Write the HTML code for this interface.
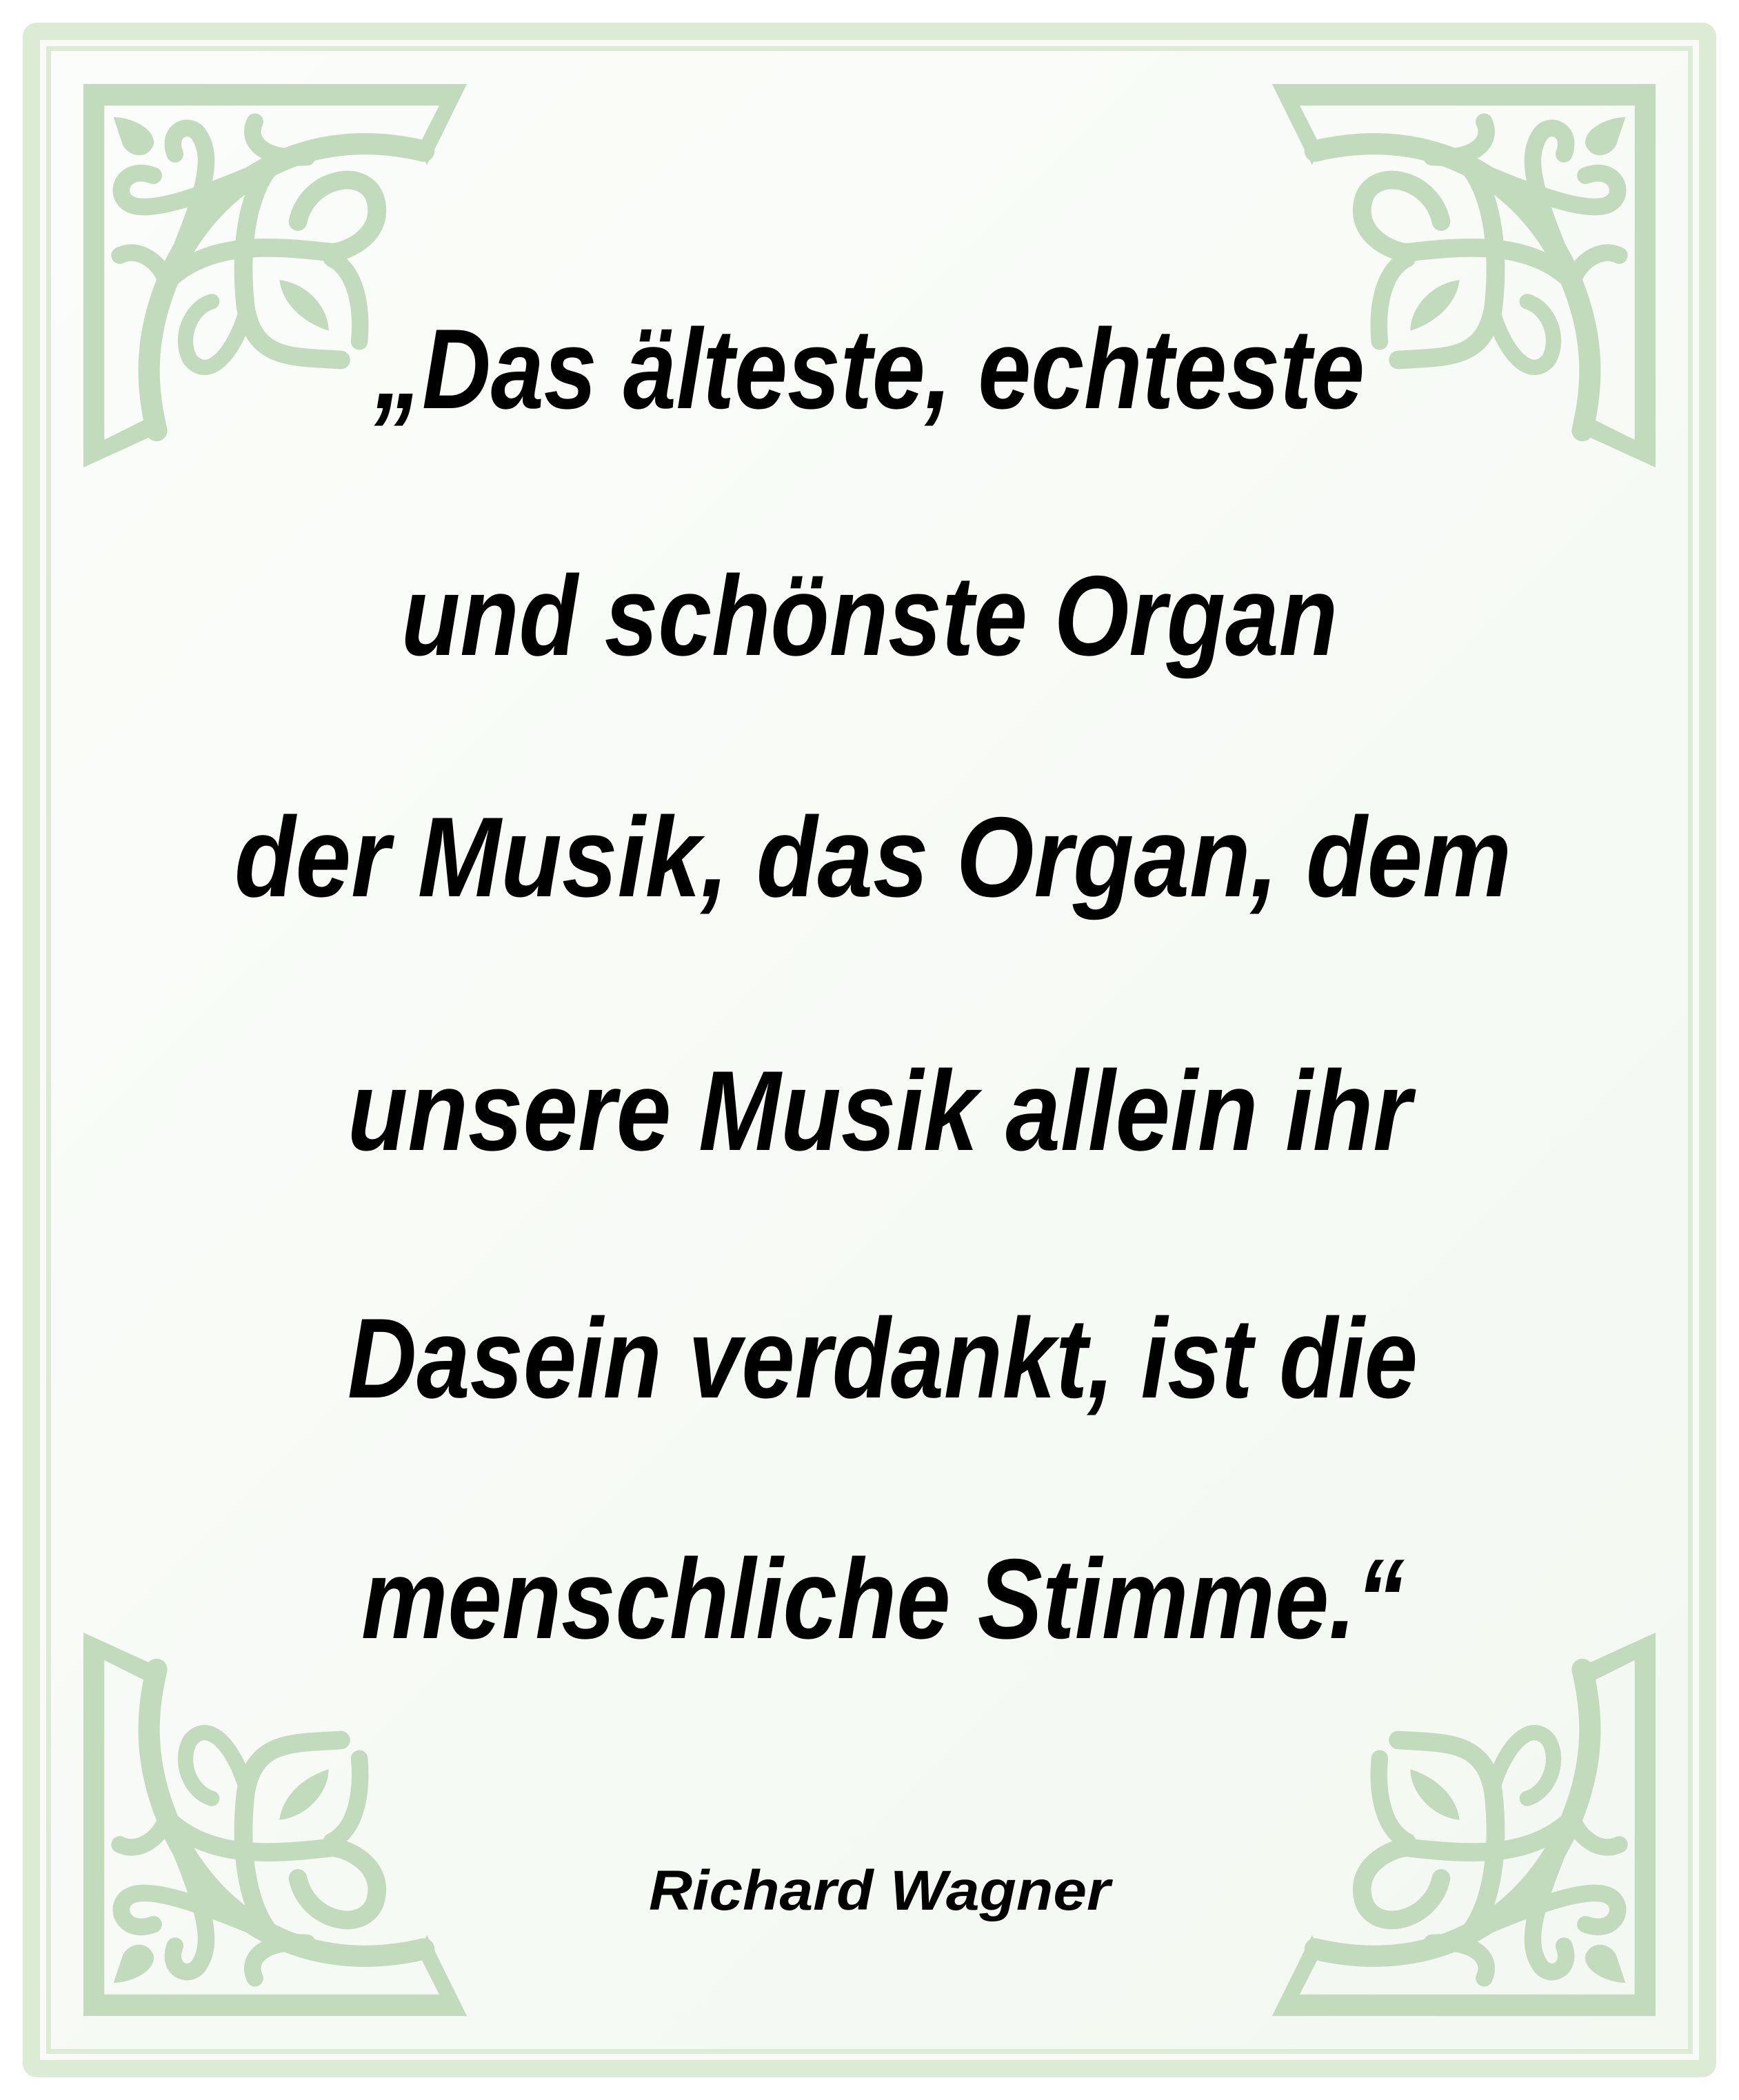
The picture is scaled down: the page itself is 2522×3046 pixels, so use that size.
<!DOCTYPE html>
<html><head><meta charset="utf-8"><style>
html,body{margin:0;padding:0;background:#fff;}
body{width:2522px;height:3046px;position:relative;overflow:hidden;}
.frame{position:absolute;left:33px;top:33px;right:33px;bottom:33px;border:25px solid #dcecd4;border-radius:20px;background:#f8fbf6;box-sizing:border-box;}
.inner{position:absolute;left:67px;top:67px;right:67px;bottom:67px;border:7px solid #dcecd4;box-sizing:border-box;background:linear-gradient(135deg,#fbfdfa,#f3f8f1);}
svg{position:absolute;}
.orn{width:557px;height:557px;}
text{font-family:"Liberation Sans",sans-serif;font-style:italic;fill:#000;}
</style></head><body>
<div class="frame"></div><div class="inner"></div>
<svg width="0" height="0"><defs>
<g id="o" fill="none" stroke="#c3dbbd" stroke-linecap="round">
<path fill="#c3dbbd" stroke="none" d="M272,252 L1520,252 L1390,515 L1360,460 L1430,322 L340,322 L340,1410 L480,1340 L535,1380 L272,1500 Z"/>
<path stroke-width="70" d="M1380,470 C1000,380 700,560 560,860 C460,1080 480,1250 510,1380"/>
<path stroke-width="60" d="M880,520 C800,620 780,800 800,980 C830,1150 950,1140 1110,1150"/>
<path stroke-width="60" d="M970,700 C1000,560 1180,520 1220,620 C1260,740 1130,800 1080,800 C900,780 700,760 560,880"/>
<path stroke-width="55" d="M1080,820 C1160,860 1180,980 1170,1090"/>
<path fill="#c3dbbd" stroke="none" d="M910,890 C1000,900 1070,980 1070,1055 C990,1030 920,970 910,890 Z"/>
<path fill="#c3dbbd" stroke="none" d="M370,360 C430,360 510,400 500,450 C480,500 420,490 400,450 Z"/>
<path stroke-width="55" d="M570,480 C540,400 620,370 650,420 C700,500 660,620 560,860"/>
<path stroke-width="55" d="M500,550 C420,520 380,580 400,620 C430,680 560,660 880,520"/>
<path stroke-width="55" d="M830,375 C800,440 860,500 1000,490"/>
<path stroke-width="50" d="M690,960 C620,980 580,1080 620,1150 C680,1220 760,1130 800,1000"/>
<path stroke-width="55" d="M390,810 C450,780 520,830 540,890"/>
</g></defs></svg>
<svg class="orn" style="left:121px;top:121px" viewBox="272 250 1250 1250"><use href="#o"/></svg>
<svg class="orn" style="left:1844px;top:121px;transform:scaleX(-1)" viewBox="272 250 1250 1250"><use href="#o"/></svg>
<svg class="orn" style="left:121px;top:2368px;transform:scaleY(-1)" viewBox="272 250 1250 1250"><use href="#o"/></svg>
<svg class="orn" style="left:1844px;top:2368px;transform:scale(-1,-1)" viewBox="272 250 1250 1250"><use href="#o"/></svg>
<svg width="2522" height="3046" style="left:0;top:0">
<g font-size="165" font-weight="bold">
<text x="543" y="592" textLength="1436" lengthAdjust="spacingAndGlyphs">„Das älteste, echteste</text>
<text x="582" y="950" textLength="1358" lengthAdjust="spacingAndGlyphs">und schönste Organ</text>
<text x="340" y="1300" textLength="1852" lengthAdjust="spacingAndGlyphs">der Musik, das Organ, dem</text>
<text x="504" y="1668" textLength="1543" lengthAdjust="spacingAndGlyphs">unsere Musik allein ihr</text>
<text x="504" y="2027" textLength="1552" lengthAdjust="spacingAndGlyphs">Dasein verdankt, ist die</text>
<text x="524" y="2376" textLength="1513" lengthAdjust="spacingAndGlyphs">menschliche Stimme.“</text>
</g>
<text x="941" y="2770" font-size="82" font-weight="bold" textLength="669" lengthAdjust="spacingAndGlyphs">Richard Wagner</text>
</svg>
</body></html>
